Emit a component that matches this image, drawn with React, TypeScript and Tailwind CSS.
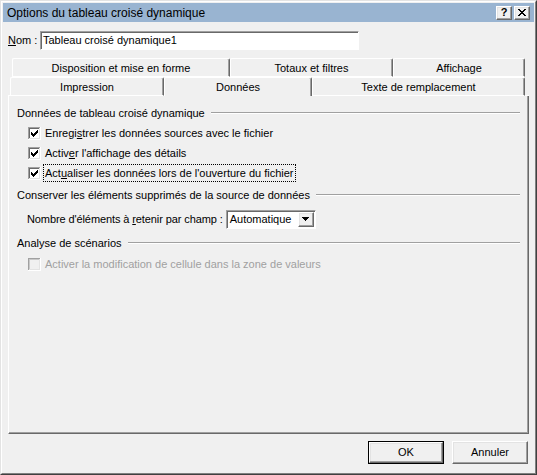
import React from 'react';

const FONT = "font-['Liberation_Sans',Arial,sans-serif]";

const CHECK_COLS: [number, number][] = [
    [3, 5], [4, 6], [5, 7], [6, 6], [7, 5], [8, 4], [9, 3],
];

const CheckBox = ({ checked, disabled }: { checked?: boolean; disabled?: boolean }) => (
    <svg width="13" height="13" viewBox="0 0 13 13" shapeRendering="crispEdges" className="shrink-0">
        <rect x="0" y="0" width="13" height="13" fill={disabled ? '#f0f0f0' : '#ffffff'} />
        <rect x="0" y="0" width="12" height="1" fill="#a0a0a0" />
        <rect x="0" y="0" width="1" height="12" fill="#a0a0a0" />
        <rect x="1" y="1" width="10" height="1" fill={disabled ? '#c8c8c8' : '#696969'} />
        <rect x="1" y="1" width="1" height="10" fill={disabled ? '#c8c8c8' : '#696969'} />
        <rect x="0" y="12" width="13" height="1" fill="#ffffff" />
        <rect x="12" y="0" width="1" height="13" fill="#ffffff" />
        <rect x="1" y="11" width="11" height="1" fill="#e3e3e3" />
        <rect x="11" y="1" width="1" height="11" fill="#e3e3e3" />
        {checked && CHECK_COLS.map(([x, y]) => (
            <rect key={x} x={x} y={y} width="1" height="3" fill="#000000" />
        ))}
    </svg>
);

const CloseGlyph = () => (
    <svg width="8" height="7" viewBox="0 0 8 7" shapeRendering="crispEdges">
        {[
            [0, 0, 2], [6, 0, 2], [1, 1, 2], [5, 1, 2], [2, 2, 4], [3, 3, 2],
            [2, 4, 4], [1, 5, 2], [5, 5, 2], [0, 6, 2], [6, 6, 2],
        ].map(([x, y, w], i) => (
            <rect key={i} x={x} y={y} width={w} height="1" fill="#000" />
        ))}
    </svg>
);

const raised =
    'border border-t-white border-l-white border-r-[#696969] border-b-[#696969] shadow-[inset_-1px_-1px_0_#a0a0a0,inset_1px_1px_0_#e3e3e3] bg-[#f0f0f0]';

const Heading = ({ children }: { children: React.ReactNode }) => (
    <div className="flex items-center h-[14px]">
        <span className="whitespace-nowrap">{children}</span>
        <div className="ml-[6px] flex-1 h-[2px] border-t border-t-[#a0a0a0] border-b border-b-white" />
    </div>
);

const Tab = ({ label, w, selected }: { label: string; w: string; selected?: boolean }) => (
    <div
        className={`${w} h-full flex items-center justify-center pt-[1px] rounded-t-[2px] border-t border-l border-r border-t-white border-l-white border-r-[#696969] shadow-[inset_-1px_0_0_#a0a0a0] ${
            selected ? 'border-b-0' : 'border-b border-b-white'
        }`}
    >
        <span className="whitespace-nowrap">{label}</span>
    </div>
);

const CheckRow = ({ checked, disabled, focused, children }: { checked?: boolean; disabled?: boolean; focused?: boolean; children: React.ReactNode }) => (
    <div className="flex items-center h-[20px] ml-[11px]">
        <CheckBox checked={checked} disabled={disabled} />
        <span
            className={`ml-[2px] px-[1px] leading-[16px] whitespace-nowrap border border-dotted ${
                focused ? 'border-black' : 'border-transparent'
            } ${disabled ? 'text-[#a0a0a0]' : ''}`}
        >
            {children}
        </span>
    </div>
);

const PushButton = ({ label, isDefault }: { label: string; isDefault?: boolean }) => (
    <div className={`w-[76px] h-[23px] ${isDefault ? 'border border-black' : ''}`}>
        <div className={`h-full w-full flex items-center justify-center ${raised}`}>{label}</div>
    </div>
);

export default function App() {
    return (
        <div className={`${FONT} text-[11px] text-black w-[537px] h-[475px] bg-[#f0f0f0] border border-t-[#e3e3e3] border-l-[#e3e3e3] border-r-[#404040] border-b-[#404040]`}>
            <div className="h-full flex flex-col border border-t-white border-l-white border-r-[#808080] border-b-[#808080] p-[1px]">
                {/* title bar */}
                <div className="h-[19px] shrink-0 bg-[#99b4d1] flex items-center justify-between pl-[4px] pr-[4px]">
                    <span className="text-[12px] whitespace-nowrap">Options du tableau croisé dynamique</span>
                    <div className="flex gap-[2px]">
                        <div className={`w-[16px] h-[14px] flex items-center justify-center font-bold text-[11px] leading-none ${raised}`}>?</div>
                        <div className={`w-[16px] h-[14px] flex items-center justify-center ${raised}`}>
                            <CloseGlyph />
                        </div>
                    </div>
                </div>

                <div className="flex-1 flex flex-col pl-[5px] pr-[5px]">
                    {/* name */}
                    <div className="mt-[9px] h-[19px] flex items-center">
                        <span className="w-[32px] whitespace-nowrap"><u>N</u>om :</span>
                        <div className="w-[319px] h-full flex items-center bg-white pl-[2px] border border-t-[#a0a0a0] border-l-[#a0a0a0] border-r-white border-b-white shadow-[inset_1px_1px_0_#696969]">
                            Tableau croisé dynamique1
                        </div>
                    </div>

                    {/* tabs */}
                    <div className="mt-[8px] h-[19px] flex">
                        <div className="w-[4px]" />
                        <Tab label="Disposition et mise en forme" w="w-[218px]" />
                        <Tab label="Totaux et filtres" w="w-[163px]" />
                        <Tab label="Affichage" w="w-[132px]" />
                    </div>
                    <div className="h-[19px] flex">
                        <div className="w-[2px] border-b border-b-white" />
                        <Tab label="Impression" w="w-[154px]" />
                        <Tab label="Données" w="w-[148px]" selected />
                        <Tab label="Texte de remplacement" w="w-[213px]" />
                        <div className="flex-1 border-b border-b-white" />
                    </div>

                    {/* panel */}
                    <div className="h-[338px] flex flex-col pl-[8px] pr-[8px] border-l border-r border-b border-l-white border-r-[#696969] border-b-[#696969] shadow-[inset_-1px_-1px_0_#a0a0a0]">
                        <div className="mt-[10px]">
                            <Heading>Données de tableau croisé dynamique</Heading>
                        </div>
                        <div className="mt-[3px]">
                            <CheckRow checked>Enregi<u>s</u>trer les données sources avec le fichier</CheckRow>
                            <CheckRow checked>Activ<u>e</u>r l'affichage des détails</CheckRow>
                            <CheckRow checked focused>Act<u>u</u>aliser les données lors de l'ouverture du fichier</CheckRow>
                        </div>
                        <div className="mt-[5px]">
                            <Heading>Conserver les éléments supprimés de la source de données</Heading>
                        </div>
                        <div className="mt-[7px] h-[20px] ml-[10px] flex items-center gap-[3px]">
                            <span className="whitespace-nowrap tracking-[-0.1px]">Nombre d'éléments à <u>r</u>etenir par champ :</span>
                            <div className="w-[90px] h-[19px] flex items-center bg-white border border-t-[#a0a0a0] border-l-[#a0a0a0] border-r-white border-b-white shadow-[inset_1px_1px_0_#696969]">
                                <span className="flex-1 pl-[3px] pt-[1px]">Automatique</span>
                                <div className={`w-[16px] h-[15px] mr-[1px] flex items-center justify-center ${raised}`}>
                                    <svg width="7" height="4" viewBox="0 0 7 4" shapeRendering="crispEdges">
                                        <rect x="0" y="0" width="7" height="1" fill="#000" />
                                        <rect x="1" y="1" width="5" height="1" fill="#000" />
                                        <rect x="2" y="2" width="3" height="1" fill="#000" />
                                        <rect x="3" y="3" width="1" height="1" fill="#000" />
                                    </svg>
                                </div>
                            </div>
                        </div>
                        <div className="mt-[7px]">
                            <Heading>Analyse de scénarios</Heading>
                        </div>
                        <div className="mt-[4px]">
                            <CheckRow disabled>Activer la modification de cellule dans la zone de valeurs</CheckRow>
                        </div>
                    </div>

                    {/* buttons */}
                    <div className="mt-[7px] flex justify-end gap-[8px] pr-[1px]">
                        <PushButton label="OK" isDefault />
                        <PushButton label="Annuler" />
                    </div>
                </div>
            </div>
        </div>
    );
}
